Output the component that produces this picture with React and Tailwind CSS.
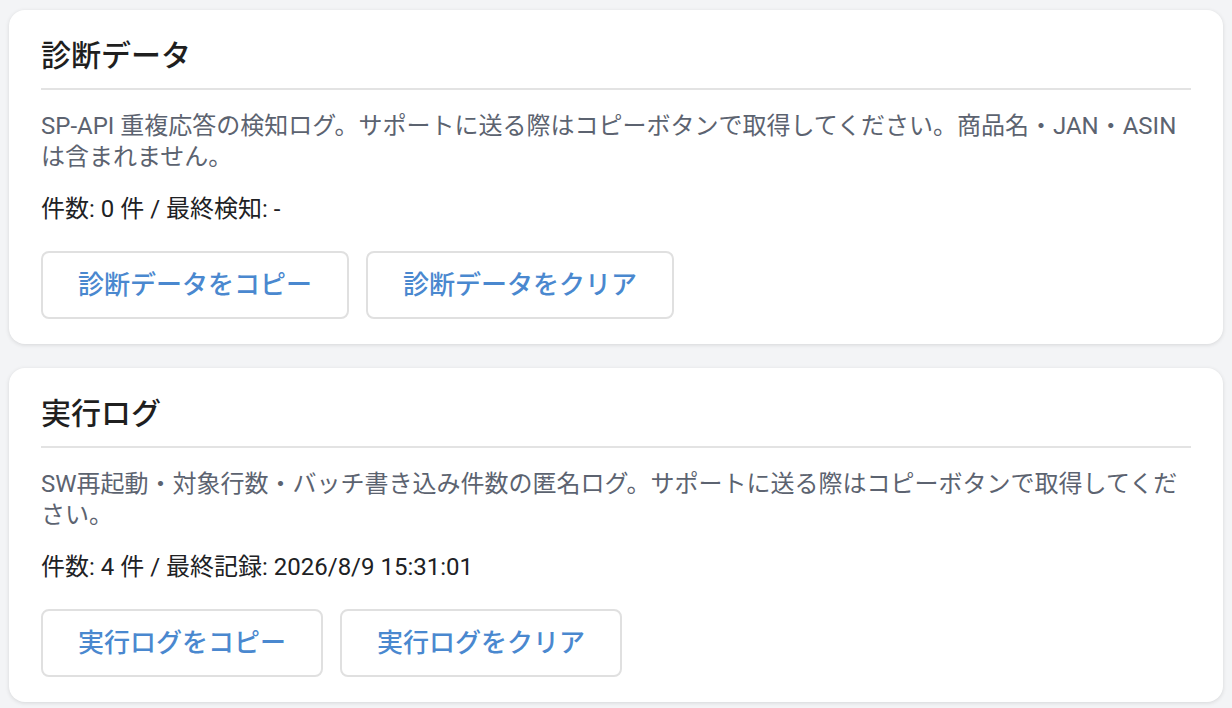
import React from "react";

const FONT = { fontFamily: 'Roboto, "Noto Sans CJK JP", sans-serif' };

function Card({ title, desc, count, buttons }) {
  return (
    <section className="bg-white rounded-[16px] shadow-[0_1px_4px_rgba(0,0,0,0.12)] px-8 pt-6 pb-[25px]">
      <h2 className="text-[30px] leading-[44px] font-medium text-[#1f1f1f] pb-[10px] border-b-2 border-[#e3e3e3]">
        {title}
      </h2>
      <p className="mt-[21px] text-[24px] leading-[31px] text-[#5c6370]">{desc}</p>
      <p className="mt-[21px] text-[24px] leading-[31px] text-[#202124]">{count}</p>
      <div className="mt-[26px] flex gap-[17px]">
        {buttons.map((b) => (
          <button
            key={b}
            className="h-[68px] px-[35px] rounded-[8px] border-2 border-[#e0e0e0] bg-white text-[26px] font-medium text-[#4a88cf]"
          >
            {b}
          </button>
        ))}
      </div>
    </section>
  );
}

export default function App() {
  return (
    <div className="min-h-[708px] bg-[#f3f4f6] px-[9px] pt-[10px] pb-[8px] flex flex-col gap-[24px]" style={FONT}>
      <Card
        title="診断データ"
        desc="SP-API 重複応答の検知ログ。サポートに送る際はコピーボタンで取得してください。商品名・JAN・ASIN は含まれません。"
        count="件数: 0 件 / 最終検知: -"
        buttons={["診断データをコピー", "診断データをクリア"]}
      />
      <Card
        title="実行ログ"
        desc="SW再起動・対象行数・バッチ書き込み件数の匿名ログ。サポートに送る際はコピーボタンで取得してください。"
        count="件数: 4 件 / 最終記録: 2026/8/9 15:31:01"
        buttons={["実行ログをコピー", "実行ログをクリア"]}
      />
    </div>
  );
}
